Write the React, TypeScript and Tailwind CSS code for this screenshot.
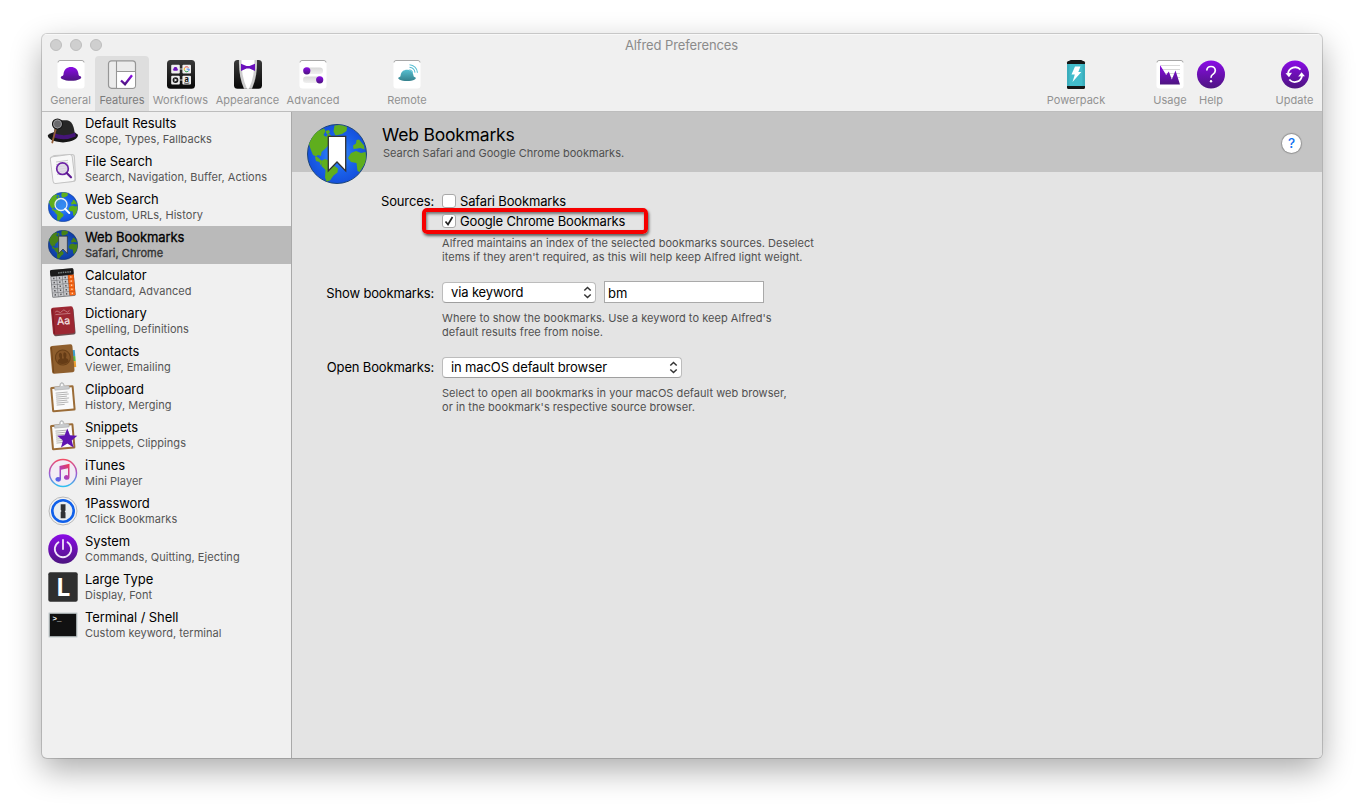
import React from "react";

type IconProps = { size?: number };

const Defs = () => (
  <svg width="0" height="0" className="absolute" aria-hidden="true">
    <defs>
      <linearGradient id="purple" x1="0" y1="0" x2="0" y2="1">
        <stop offset="0" stopColor="#8a0be6" />
        <stop offset="1" stopColor="#4d1580" />
      </linearGradient>
      <linearGradient id="teal" x1="0" y1="0" x2="0" y2="1">
        <stop offset="0" stopColor="#56bfd0" />
        <stop offset="1" stopColor="#35808c" />
      </linearGradient>
      <linearGradient id="dark" x1="0" y1="0" x2="0" y2="1">
        <stop offset="0" stopColor="#3a3a3a" />
        <stop offset="1" stopColor="#080808" />
      </linearGradient>
      <linearGradient id="itunesRing" x1="0" y1="0" x2="0" y2="1">
        <stop offset="0" stopColor="#f04d68" />
        <stop offset="0.5" stopColor="#a25ad0" />
        <stop offset="1" stopColor="#2fc0f0" />
      </linearGradient>
      <linearGradient id="itunesNote" x1="1" y1="0" x2="0" y2="1">
        <stop offset="0" stopColor="#f23a50" />
        <stop offset="0.5" stopColor="#b03fb8" />
        <stop offset="1" stopColor="#3b6ff5" />
      </linearGradient>
      <radialGradient id="ocean" cx="0.5" cy="0.5" r="0.5">
        <stop offset="0" stopColor="#3a95fc" />
        <stop offset="0.6" stopColor="#1b62ea" />
        <stop offset="1" stopColor="#1450dc" />
      </radialGradient>
      <linearGradient id="track" x1="0" y1="0" x2="0" y2="1">
        <stop offset="0" stopColor="#d8d8d8" />
        <stop offset="1" stopColor="#f0f0f0" />
      </linearGradient>
    </defs>
  </svg>
);

const Tile = () => (
  <>
    <rect x="0.5" y="0.5" width="27" height="28" rx="3" fill="#fff" />
    <path d="M1 2.5Q1 .5 3 .5H25Q27 .5 27 2.5" fill="none" stroke="#a8a8a8" />
  </>
);

const HatShape = () => (
  <path d="M6.500 14C7 9.500 10 7 14 7s7 2.500 7.500 7c0 1 .4 1.700 1.200 2 2 .5 2 2 .3 2.900C20.500 20.200 17.500 20.800 14 20.800s-6.500-.6-9-1.900c-1.700-.9-1.700-2.400.3-2.900.8-.3 1.200-1 1.200-2z" />
);

const GeneralIcon = () => (
  <svg width="30" height="30" viewBox="-1 0 30 30"><Tile /><g fill="url(#purple)"><HatShape /></g></svg>
);
const FeaturesIcon = () => (
  <svg width="30" height="30" viewBox="-1 0 30 30">
    <rect x="0.500" y="0.800" width="27" height="27.500" rx="3" fill="#ececec" stroke="#969696" strokeWidth="1.200" />
    <path d="M9 11.500H27V25.700q0 2-2 2H9z" fill="#fff" />
    <path d="M8.500 1V28M8.500 11.500H27" stroke="#969696" strokeWidth="1.100" fill="none" />
    <path d="M13 20.500l4 3.700 7-9" fill="none" stroke="url(#purple)" strokeWidth="2.300" />
  </svg>
);
const WorkflowsIcon = () => (
  <svg width="30" height="30" viewBox="-1 0 30 30">
    <rect x="0" y="0" width="28" height="28.800" rx="3.500" fill="url(#dark)" />
    <path d="M12 9h5M12 20h5" stroke="#ccc" strokeWidth="1.200" />
    <rect x="4.200" y="4.800" width="8.600" height="8.600" rx="1" fill="#eee" />
    <rect x="15.400" y="4.800" width="8.600" height="8.600" rx="1" fill="#eee" />
    <rect x="4.200" y="15.800" width="8.600" height="8.600" rx="1" fill="#eee" />
    <rect x="15.400" y="15.800" width="8.600" height="8.600" rx="1" fill="#eee" />
    <g transform="translate(4.700 5.200) scale(.27)" fill="#6c12b8"><HatShape /></g>
    <g fill="none" strokeWidth="1">
      <path d="M21.500 7.600A2.600 2.600 0 0 0 17.500 7.900" stroke="#e84335" />
      <path d="M17.500 7.900a2.600 2.600 0 0 0 0 2.500" stroke="#fbbc05" />
      <path d="M17.500 10.400a2.600 2.600 0 0 0 3.700 .9" stroke="#34a853" />
      <path d="M21.200 11.300q1-.8 1-2.200H19.700" stroke="#4285f4" />
    </g>
    <circle cx="8.500" cy="20.100" r="2.900" fill="#1b1b1b" />
    <path d="M7.500 18.500v3.200l2.800-1.600z" fill="#eee" />
    <text x="19.700" y="22.300" fontSize="7.500" fontWeight="700" textAnchor="middle" fill="#111">a</text>
    <path d="M17 22.900q2.800 1.200 5.400 0" stroke="#111" strokeWidth=".7" fill="none" />
  </svg>
);
const AppearanceIcon = () => (
  <svg width="30" height="30" viewBox="-1 0 30 30">
    <rect x="0" y="0" width="28" height="28.800" rx="3.500" fill="url(#dark)" />
    <path d="M5 0H23Q23.500 16 18 28.800H10Q4.500 16 5 0z" fill="#cdcdcd" />
    <path d="M7.500 0H20.500Q21 15 15 28.800H13Q7 15 7.500 0z" fill="#fff" />
    <path d="M7 3.700l5.500 2.300h3l5.500-2.300v7.300l-5.500-2.500h-3L7 11z" fill="#6a10bc" />
  </svg>
);
const AdvancedIcon = () => (
  <svg width="30" height="30" viewBox="-1 0 30 30">
    <Tile />
    <rect x="4" y="7.500" width="20" height="6.500" rx="3.250" fill="url(#track)" />
    <rect x="4" y="16.500" width="20" height="6.500" rx="3.250" fill="url(#track)" />
    <circle cx="7.800" cy="10.800" r="3.600" fill="url(#purple)" />
    <circle cx="20.700" cy="19.800" r="3.600" fill="url(#purple)" />
  </svg>
);
const RemoteIcon = () => (
  <svg width="30" height="30" viewBox="-1 0 30 30">
    <Tile />
    <g transform="translate(2 4) scale(.86 .82)" fill="url(#teal)"><HatShape /></g>
    <g fill="none" stroke="#5cc0d4" strokeWidth="1.100">
      <path d="M16.500 4.700a8.500 8.500 0 0 1 8 8" />
      <path d="M16.500 7.300a6 6 0 0 1 5.500 5.300" />
      <path d="M16.300 9.800q3 .5 3.300 3" />
    </g>
  </svg>
);
const PowerpackIcon = () => (
  <svg width="20" height="30" viewBox="-1 0 20 30">
    <rect x="2" y="0" width="14" height="5" rx="2" fill="#111" />
    <rect x="0" y="1" width="18" height="28" rx="1.500" fill="#151515" />
    <rect x="0" y="4" width="18" height="22" fill="#43bccb" />
    <rect x="0" y="4" width="2.500" height="22" fill="#3badbc" />
    <rect x="15.500" y="4" width="2.500" height="22" fill="#3badbc" />
    <path d="M8 6.500h5.500l-2.200 5.500h3L5.500 22l2.300-7.500H4.500z" fill="#fff" />
  </svg>
);
const UsageIcon = () => (
  <svg width="30" height="30" viewBox="-1 0 30 30">
    <Tile />
    <path d="M5 5.500h19M5 9.500h19M5 13.500h19M5 17.500h19" stroke="#d9d9d9" />
    <path d="M4 5l5.300 8.500 .8 1.500 2.700-3.500 3 8L19.500 10.500l4.500 14H4z" fill="url(#purple)" />
  </svg>
);
const HelpIcon = () => (
  <svg width="30" height="30" viewBox="-1 0 30 30">
    <circle cx="14" cy="14.500" r="14" fill="url(#purple)" />
    <path d="M9.800 10.500Q10 6.500 14 6.500t4.300 3.900c0 2.200-1.300 3.100-2.500 4-1.200.8-1.800 1.400-1.800 3.300" fill="none" stroke="#fff" strokeWidth="1.700" />
    <circle cx="14" cy="21.300" r="1.200" fill="#fff" />
  </svg>
);
const UpdateIcon = () => (
  <svg width="30" height="30" viewBox="-1 0 30 30">
    <circle cx="14" cy="14.500" r="14" fill="url(#purple)" />
    <g fill="none" stroke="#fff" strokeWidth="1.800">
      <path d="M19.500 9.600A7.300 7.300 0 0 0 7 13.500" />
      <path d="M8.300 19.500A7.300 7.300 0 0 0 21 15.800" />
    </g>
    <path d="M4.500 13.300L11 12.700 8 17.300zM17.200 16.500L20.600 12.200l3.300 4.100z" fill="#fff" />
  </svg>
);

const GlobeBase = () => (
  <>
    <circle cx="30" cy="30" r="29.500" fill="url(#ocean)" stroke="#1d4679" strokeWidth="1" />
    <g fill="#5fae1d">
      <path d="M2 20Q5 12 11 7l6-2.500 1.500 2.500-2 4 2.500 2 2.500-3.500 2.500 2-1 4 2 2-3 3-3.500 4-4 3.500-.5 4-3-1-3 2 1 4 3.500 1 1 3.500L15 37l-4.500-4L6 31 3.500 25z" />
      <path d="M14 37l4-2 5 2 3 4 5 3.500-.5 4-4 3-3.500 5-3.500 1-1.500-4 .5-7.500-4-4z" />
      <path d="M18.500 7l3.500-1 1 2.500-3 2zM27.500 1.500Q34 0 40 3l-.5 4-4.500 3-6.500 1.500-2-4z" />
      <path d="M46.500 25l-.5-3.500 3-2 .5-3.500 2.500-.5 5 6 .5 4-4-1.500-3 .5zM41 34l3-5 5-2 5 2 4.500-1q1.500 7-1.500 13l-4.500 7-2-1-1-8-5.500-1z" />
    </g>
  </>
);
const GlobeBookmark = ({ size = 30, fill = "#fff" }: IconProps & { fill?: string }) => (
  <svg width={size} height={size} viewBox="0 0 60 60" className="shrink-0">
    <GlobeBase />
    <path d="M21.300 12.300h17.400V47l-8.700-9-8.700 9z" fill={fill} stroke="#333" strokeWidth="1.300" />
  </svg>
);
const GlobeSearch = () => (
  <svg width="30" height="30" viewBox="0 0 60 60">
    <GlobeBase />
    <circle cx="26" cy="25" r="12" fill="#3789ee" fillOpacity=".75" stroke="#e8eef5" strokeWidth="2.600" />
    <path d="M34.500 34l8 8" stroke="#fff" strokeWidth="4" strokeLinecap="round" />
  </svg>
);
const DefaultResultsIcon = () => (
  <svg width="32" height="30" viewBox="0 0 32 30">
    <path d="M.8 19q3-2 6.500-3l17.500-.2q4.500 1 6.200 3Q31 25 16 26.500.5 25 .8 19z" fill="#161616" />
    <path d="M7 20Q7 5.500 13.500 4.200h6.500Q27 5 28 20q-10 5-21 0z" fill="#262626" />
    <path d="M6.500 17q11 4.500 21.800-.5l.4 4q-11.500 5-22.400.8z" fill="#451578" />
    <path d="M8.800 13L5.300 26.500" stroke="#935f38" strokeWidth="1.800" strokeLinecap="round" />
    <circle cx="10.500" cy="8" r="5" fill="#6a6a6d" stroke="#151515" strokeWidth="1.200" />
    <circle cx="10.500" cy="8" r="4" fill="none" stroke="#a2a2a5" strokeWidth=".8" />
  </svg>
);
const FileSearchIcon = () => (
  <svg width="30" height="32" viewBox="0 0 30 32">
    <rect x="5" y="2" width="22" height="27" rx="2.500" fill="#ececec" stroke="#c6c6c6" transform="rotate(-3 15 15)" />
    <rect x="3.500" y="2.500" width="22" height="27" rx="2.500" fill="#f8f8f8" stroke="#c4c4c4" transform="rotate(-7 15 15)" />
    <path d="M8 9l12-1.700M8 11.500l12-1.700M8.500 14l12-1.700M8.500 16.500l12-1.700M9 19l12-1.700M9 21.500l11-1.700" stroke="#c4c4c4" strokeWidth=".9" />
    <circle cx="14.500" cy="15.700" r="5.800" fill="#dcd5e3" fillOpacity=".8" stroke="#6d24a6" strokeWidth="1.700" />
    <path d="M18.700 20l4.300 4.300" stroke="#5d1a92" strokeWidth="2.200" strokeLinecap="round" />
  </svg>
);
const CalculatorIcon = () => (
  <svg width="28" height="32" viewBox="0 0 28 32">
    <g transform="rotate(-5 14 16)">
      <rect x="2" y="2" width="23.500" height="28" rx="1.500" fill="#7c7d80" />
      <rect x="2" y="2" width="23.500" height="6.500" rx="1.500" fill="#1b1b1b" />
      <path d="M10 5.500h13" stroke="#788080" strokeWidth="1.500" strokeDasharray="1.500 .8" />
      <rect x="19.500" y="8.500" width="6" height="20.500" fill="#c44a10" />
      {[0, 1, 2, 3, 4].map((r) => [0, 1, 2, 3].map((c) => (
        <rect key={`${r}${c}`} x={2.8 + c * 5.7} y={9 + r * 4.1} width="5" height="3.500" fill={c === 3 ? "#fa6a18" : "#c6c7ca"} />
      )))}
      {[0, 1, 2, 3, 4].map((r) => [0, 1, 2, 3].map((c) => (
        <rect key={`k${r}${c}`} x={4.6 + c * 5.7} y={10 + r * 4.1} width="1.300" height="1.500" fill={c === 3 ? "#ffd3b5" : "#4a4a4d"} />
      )))}
    </g>
  </svg>
);
const DictionaryIcon = () => (
  <svg width="28" height="32" viewBox="0 0 28 32">
    <g transform="rotate(-5 14 16)">
      <rect x="3.500" y="3.500" width="22" height="27" rx="2" fill="#6c4f50" />
      <rect x="3" y="2" width="22" height="27" rx="2" fill="#9c2732" />
      <path d="M4.500 3v25" stroke="#7b1b25" />
      <path d="M7 6.500q2-2 3.500 0t3.500-.4 3.500.3 4-.5M7 9h15" stroke="#c98287" strokeWidth=".8" fill="none" />
      <text x="14.500" y="19.500" fontSize="10.500" textAnchor="middle" fill="#f6e8e9" stroke="#f6e8e9" strokeWidth=".2">Aa</text>
    </g>
  </svg>
);
const ContactsIcon = () => (
  <svg width="28" height="32" viewBox="0 0 28 32">
    <g transform="rotate(-5 14 16)">
      <rect x="20" y="8" width="6.500" height="6" fill="#3c9fc8" />
      <rect x="20" y="14" width="6.500" height="5" fill="#56b949" />
      <rect x="20" y="19" width="6.500" height="6" fill="#e99c2c" />
      <rect x="2" y="2" width="22.500" height="28" rx="2" fill="#8f5f2e" />
      <path d="M3.500 3v26" stroke="#74471c" />
      <circle cx="14" cy="14.500" r="7.500" fill="#855527" stroke="#6a4119" />
      <path d="M8.500 19q0-3 2.500-3.500-2-5 .8-6 2.500.5 1.200 5.500l1 1 1-1q-1.200-5 1.200-5.500 2.800 1 .8 6 2.500.5 2.500 3.500-5.500 4-11 0z" fill="#653c16" />
    </g>
  </svg>
);
const ClipboardArt = () => (
  <g transform="rotate(-5 14 16)">
    <rect x="2" y="5" width="23.500" height="25.500" rx="1.500" fill="#9b6c37" />
    <path d="M4 7h19.500v21.500H4z" fill="#fafafa" />
    <path d="M7 11.500h12M7 13.500h13M7 15.500h11M7 17.500h13M7 19.500h11M7 21.500h12M7 23.500h8" stroke="#a5a5a5" strokeWidth=".8" />
    <path d="M6.500 8.500V5.200h5Q12 1.500 14 1.500T16.500 5.200H21v3.300z" fill="#c9cbcd" stroke="#a5a5a5" strokeWidth=".5" />
    <circle cx="14" cy="4" r="1" fill="#fff" />
  </g>
);
const ClipboardIcon = () => <svg width="28" height="32" viewBox="0 0 28 32"><ClipboardArt /></svg>;
const SnippetsIcon = () => (
  <svg width="30" height="32" viewBox="0 0 30 32">
    <g transform="translate(.8 0)"><ClipboardArt /></g>
    <path d="M19.300 9.500l2.700 6.700 7.300.5-5.600 4.700 1.900 7.200-6.300-4-6.300 4 1.900-7.200L9.300 16.700l7.300-.5z" fill="#5f14b0" />
  </svg>
);
const ItunesIcon = () => (
  <svg width="30" height="30" viewBox="0 0 30 30">
    <circle cx="15" cy="15" r="13.500" fill="#f2ecf5" stroke="url(#itunesRing)" strokeWidth="1.500" />
    <path d="M11.500 8l10-2.200v13.700a2.800 2.300 0 1 1-1.500-2V10.200L13 11.700v9.600a2.800 2.300 0 1 1-1.500-2z" fill="url(#itunesNote)" />
  </svg>
);
const OnePasswordIcon = () => (
  <svg width="30" height="30" viewBox="0 0 30 30">
    <circle cx="15" cy="15" r="14" fill="#f2f2f2" stroke="#b9b9b9" />
    <circle cx="15" cy="15" r="10.700" fill="#e9edf0" stroke="#1060ea" strokeWidth="2.600" />
    <path d="M12.700 8.300h4.800v6.200l-.8 1 .8 1v5.700h-4.800V16l.8-1-.8-1z" fill="#303236" />
  </svg>
);
const SystemIcon = () => (
  <svg width="30" height="30" viewBox="0 0 30 30">
    <circle cx="15" cy="15" r="14.800" fill="url(#purple)" />
    <path d="M10.500 8.200a8.200 8.200 0 1 0 9 0M15 6V15" fill="none" stroke="#f1e6fa" strokeWidth="1.800" strokeLinecap="round" />
  </svg>
);
const LargeTypeIcon = () => (
  <svg width="30" height="30" viewBox="0 0 30 30">
    <rect x="0.300" y="0.300" width="29.400" height="29.400" rx="2" fill="#2f2f2f" />
    <text x="15.500" y="23.500" fontSize="24" fontWeight="700" textAnchor="middle" fill="#fff">L</text>
  </svg>
);
const TerminalIcon = () => (
  <svg width="30" height="28" viewBox="0 0 30 28">
    <rect x="1.200" y="2.200" width="27.600" height="23.600" fill="#111" stroke="#b9c2c4" strokeWidth="1.200" />
    <text x="4.500" y="9.500" fontSize="7.500" fontWeight="700" fill="#fff" className="font-['Liberation_Mono',monospace]">&gt;_</text>
  </svg>
);

type ToolItem = { label: string; icon: React.ReactNode; box: string; active?: boolean };
const leftTools: ToolItem[] = [
  { label: "General", icon: <GeneralIcon />, box: "ml-[4px] w-[49px]" },
  { label: "Features", icon: <FeaturesIcon />, box: "w-[54px]", active: true },
  { label: "Workflows", icon: <WorkflowsIcon />, box: "w-[63px]" },
  { label: "Appearance", icon: <AppearanceIcon />, box: "w-[71px]" },
  { label: "Advanced", icon: <AdvancedIcon />, box: "w-[60px]" },
  { label: "Remote", icon: <RemoteIcon />, box: "ml-[40px] w-[48px]" },
];
const rightTools: ToolItem[] = [
  { label: "Powerpack", icon: <PowerpackIcon />, box: "w-[64px] mr-[40px]" },
  { label: "Usage", icon: <UsageIcon />, box: "w-[44px]" },
  { label: "Help", icon: <HelpIcon />, box: "w-[38px] mr-[40px]" },
  { label: "Update", icon: <UpdateIcon />, box: "w-[49px] mr-[3px]" },
];

const Tool = ({ item }: { item: ToolItem }) => (
  <div className={`flex h-[55px] shrink-0 flex-col items-center pt-[4px] ${item.box} ${item.active ? "rounded-t-[4px] bg-[#dedede] text-[#7b7b7b]" : "text-[#929292]"}`}>
    {item.icon}
    <span className="mt-[3px] text-[11px] leading-[14px] tracking-[0.02px] whitespace-nowrap">{item.label}</span>
  </div>
);

type Row = { title: string; sub: string; icon: React.ReactNode; active?: boolean };
const rows: Row[] = [
  { title: "Default Results", sub: "Scope, Types, Fallbacks", icon: <DefaultResultsIcon /> },
  { title: "File Search", sub: "Search, Navigation, Buffer, Actions", icon: <FileSearchIcon /> },
  { title: "Web Search", sub: "Custom, URLs, History", icon: <GlobeSearch /> },
  { title: "Web Bookmarks", sub: "Safari, Chrome", icon: <div className="flex brightness-75"><GlobeBookmark fill="#f2f2f2" /></div>, active: true },
  { title: "Calculator", sub: "Standard, Advanced", icon: <CalculatorIcon /> },
  { title: "Dictionary", sub: "Spelling, Definitions", icon: <DictionaryIcon /> },
  { title: "Contacts", sub: "Viewer, Emailing", icon: <ContactsIcon /> },
  { title: "Clipboard", sub: "History, Merging", icon: <ClipboardIcon /> },
  { title: "Snippets", sub: "Snippets, Clippings", icon: <SnippetsIcon /> },
  { title: "iTunes", sub: "Mini Player", icon: <ItunesIcon /> },
  { title: "1Password", sub: "1Click Bookmarks", icon: <OnePasswordIcon /> },
  { title: "System", sub: "Commands, Quitting, Ejecting", icon: <SystemIcon /> },
  { title: "Large Type", sub: "Display, Font", icon: <LargeTypeIcon /> },
  { title: "Terminal / Shell", sub: "Custom keyword, terminal", icon: <TerminalIcon /> },
];

const Checkbox = ({ checked }: { checked?: boolean }) => (
  <span className="flex h-[14px] w-[14px] items-center justify-center rounded-[3px] border border-[#a9a9a9] bg-white">
    {checked && (
      <svg width="12" height="12" viewBox="0 0 12 12"><path d="M2.500 6.500l2.500 3L9.500 2" fill="none" stroke="#222" strokeWidth="1.700" /></svg>
    )}
  </span>
);

const Select = ({ label, box }: { label: string; box: string }) => (
  <div className={`flex h-[21px] items-center justify-between rounded-[4px] border border-[#bcbcbc] border-b-[#9f9f9f] bg-white pr-[3px] pl-[8px] ${box}`}>
    <span className="text-[13px] leading-[18px] tracking-[-0.13px] whitespace-nowrap">{label}</span>
    <svg width="9" height="13" viewBox="0 0 9 13"><path d="M1.300 4.500L4.500 1.500l3.200 3M1.300 8.500l3.200 3 3.200-3" fill="none" stroke="#333" strokeWidth="1.500" /></svg>
  </div>
);

const Note = ({ lines, box }: { lines: string[]; box: string }) => (
  <div className={`ml-[150px] text-[11px] leading-[14px] tracking-[0.04px] text-[#505050] ${box}`}>
    {lines.map((l) => <div key={l} className="whitespace-nowrap">{l}</div>)}
  </div>
);

export default function App() {
  return (
    <div className="h-[808px] w-[1364px] overflow-hidden bg-white px-[42px] pt-[34px] font-['Inter',sans-serif] text-black">
      <Defs />
      <div className="flex h-[724px] w-[1280px] flex-col overflow-hidden rounded-[5px] bg-[#f0f0f0] shadow-[0_0_0_1px_rgba(0,0,0,0.16),0_12px_32px_rgba(0,0,0,0.33)]">
        <div className="flex h-[22px] shrink-0 items-start border-t border-[#f8f8f8] pl-[8px]">
          <div className="flex w-[200px] gap-[8px] pt-[4px]">
            <span className="h-[12px] w-[12px] rounded-full border border-[#bdbdbd] bg-[#cfcfcf]" />
            <span className="h-[12px] w-[12px] rounded-full border border-[#bdbdbd] bg-[#cfcfcf]" />
            <span className="h-[12px] w-[12px] rounded-full border border-[#bdbdbd] bg-[#cfcfcf]" />
          </div>
          <div className="w-[863px] pt-[1px] text-center text-[13px] leading-[18px] tracking-[-0.12px] text-[#8b8b8b]">Alfred Preferences</div>
        </div>
        <div className="flex h-[56px] shrink-0 border-b border-[#bdbdbd]">
          {leftTools.map((t) => <Tool key={t.label} item={t} />)}
          <div className="flex-1" />
          {rightTools.map((t) => <Tool key={t.label} item={t} />)}
        </div>
        <div className="flex min-h-0 flex-1">
          <div className="w-[250px] shrink-0 border-r border-[#a9a9a9]">
            {rows.map((r) => (
              <div key={r.title} className={`flex h-[38px] ${r.active ? "bg-[#bababa]" : ""}`}>
                <div className="flex w-[42px] shrink-0 items-center justify-center">{r.icon}</div>
                <div className="ml-[1px] pt-[3px]">
                  <div className={`text-[13px] leading-[17px] tracking-[-0.08px] whitespace-nowrap ${r.active ? "tracking-[-0.2px] [-webkit-text-stroke:0.3px_black]" : ""}`}>{r.title}</div>
                  <div className={`text-[11px] leading-[14px] tracking-[0.04px] whitespace-nowrap ${r.active ? "text-[#333] [-webkit-text-stroke:0.3px_#333]" : "text-[#555]"}`}>{r.sub}</div>
                </div>
              </div>
            ))}
          </div>
          <div className="flex-1 bg-[#e4e4e4]">
            <div className="flex h-[60px] bg-[#c4c4c4] pl-[15px]">
              <div className="mt-[12px] h-[60px] w-[60px] shrink-0"><GlobeBookmark size={60} /></div>
              <div className="ml-[16px] pt-[12px]">
                <div className="-ml-px text-[17.500px] leading-[22px] tracking-[-0.2px]">Web Bookmarks</div>
                <div className="text-[11px] leading-[15px] text-[#505050]">Search Safari and Google Chrome bookmarks.</div>
              </div>
              <div className="mt-[22px] mr-[21px] ml-auto flex h-[19px] w-[19px] items-center justify-center rounded-full bg-white text-[13.500px] leading-[19px] font-medium text-[#1070f0] shadow-[0_0_1px_1px_rgba(0,0,0,0.25)]">?</div>
            </div>
            <div className="flex pt-[20px]">
              <div className="w-[142px] text-right text-[13px] leading-[19px] tracking-[-0.13px]">Sources:</div>
              <div className="text-[13px] leading-[18px] tracking-[-0.16px]">
                <div className="ml-[8px] flex h-[16px] items-center gap-[4px] pt-[2px]"><Checkbox /><span>Safari Bookmarks</span></div>
                <div className="-ml-[12px] flex h-[26px] w-[226px] items-center gap-[4px] rounded-[5px] border-4 border-[#f60000] pl-[16px] shadow-[1px_2px_3px_rgba(0,0,0,0.6),inset_1px_2px_3px_rgba(0,0,0,0.5)]"><Checkbox checked /><span className="whitespace-nowrap">Google Chrome Bookmarks</span></div>
              </div>
            </div>
            <Note box="mt-[2px]" lines={["Alfred maintains an index of the selected bookmarks sources. Deselect", "items if they aren't required, as this will help keep Alfred light weight."]} />
            <div className="mt-[17px] flex h-[22px] items-center">
              <div className="w-[142px] pt-[2px] text-right text-[13px] leading-[20px] tracking-[-0.16px]">Show bookmarks:</div>
              <Select label="via keyword" box="ml-[8px] w-[154px]" />
              <div className="ml-[8px] h-[22px] w-[160px] border border-[#a9a9a9] bg-white pl-[3px] text-[13px] leading-[22px]">bm</div>
            </div>
            <Note box="mt-[8px]" lines={["Where to show the bookmarks. Use a keyword to keep Alfred's", "default results free from noise."]} />
            <div className="mt-[17px] flex h-[22px] items-center">
              <div className="w-[142px] text-right text-[13px] leading-[20px] tracking-[-0.16px]">Open Bookmarks:</div>
              <Select label="in macOS default browser" box="ml-[8px] w-[240px]" />
            </div>
            <Note box="mt-[8px]" lines={["Select to open all bookmarks in your macOS default web browser,", "or in the bookmark's respective source browser."]} />
          </div>
        </div>
      </div>
    </div>
  );
}
